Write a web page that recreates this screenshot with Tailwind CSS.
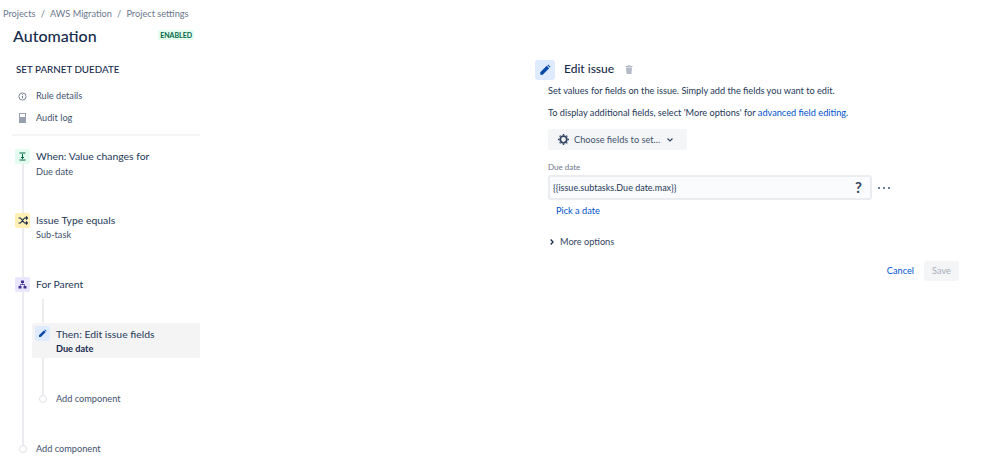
<!DOCTYPE html>
<html><head><meta charset="utf-8"><title>Automation</title>
<script src="https://cdn.jsdelivr.net/npm/@tailwindcss/browser@4"></script></head>
<body class="bg-white font-['Lato','Open_Sans',sans-serif] text-[#172b4d]">
<div class="w-[999px] h-[474px] overflow-hidden flex relative">
  <aside class="w-[535px] shrink-0 pl-[12px]">
    <div class="ml-[-9px] h-[26px] pt-[7px] text-[9.2px] leading-[14px] text-[#6b778c] flex gap-[5.2px]"><span>Projects</span><span>/</span><span>AWS Migration</span><span>/</span><span>Project settings</span></div>
    <div class="w-[182px] flex items-center justify-between h-[20px] pl-[1px]">
      <h1 class="text-[16px] font-medium leading-[20px] text-[#172b4d]">Automation</h1>
      <span class="mt-[-3px] h-[10px] px-[2px] bg-[#e3fcef] rounded-[2px] text-[7px] leading-[10px] font-bold text-[#006644]">ENABLED</span>
    </div>
    <div class="ml-[4px] mt-[16px] text-[9.8px] leading-[14px] font-medium text-[#172b4d]">SET PARNET DUEDATE</div>
    <div class="ml-[6px] mt-[13px] h-[14px] flex items-center gap-[9px] text-[9.2px] text-[#42526e]">
      <svg class="w-[9px] h-[9px]" viewBox="0 0 10 10" fill="none" stroke="#6b778c"><circle cx="5" cy="5" r="4"/><path d="M5 4.5v2.5M5 2.6v1" stroke-width="1.2"/></svg><span>Rule details</span></div>
    <div class="ml-[6px] mt-[8px] h-[14px] flex items-center gap-[9px] text-[9.2px] text-[#42526e]">
      <svg class="w-[9px] h-[10px]" viewBox="0 0 9 10"><path d="M1 0h7v10H1z" fill="#97a0af"/><path d="M2 1h5v3H2z" fill="#fff"/></svg><span>Audit log</span></div>
    <div class="w-[188px] h-[2px] bg-[#f4f5f7] mt-[9px]"></div>

    <div class="relative mt-[13px] w-[188px]">
      <div class="absolute left-[10px] top-[14px] w-[2px] h-[285px] bg-[#ebecf0]"></div>
      <div class="absolute left-[30px] top-[150px] w-[2px] h-[103px] bg-[#ebecf0]"></div>

      <div class="relative flex gap-[6px] ml-[3px] h-[64px]">
        <span class="w-[15px] h-[15px] rounded-[2px] bg-[#e3fcef] flex items-center justify-center"><svg class="w-[9px] h-[9px]" viewBox="0 0 9 9" fill="none" stroke="#006644" stroke-width="1"><path d="M1.5 1h6M1.5 8h6M4.5 2v4.5M3 5l1.5 1.5L6 5"/></svg></span>
        <div class="text-[10.4px] leading-[15px] text-[#253858]">When: Value changes for<div class="text-[9.2px] leading-[15px] text-[#42526e]">Due date</div></div>
      </div>
      <div class="relative flex gap-[6px] ml-[3px] h-[64px]">
        <span class="w-[15px] h-[15px] rounded-[2px] bg-[#fff0b3] flex items-center justify-center"><svg class="w-[10px] h-[9px]" viewBox="0 0 10 9" fill="none" stroke="#172b4d" stroke-width="1.2"><path d="M0.5 2h2l4 5h3M0.5 7h2l4-5h3M8 0.5L9.5 2 8 3.5M8 5.5L9.5 7 8 8.5"/></svg></span>
        <div class="text-[10.4px] leading-[15px] text-[#253858]">Issue Type equals<div class="text-[9.2px] leading-[14px] text-[#42526e]">Sub-task</div></div>
      </div>
      <div class="relative flex gap-[6px] ml-[3px] h-[46px]">
        <span class="w-[15px] h-[15px] rounded-[2px] bg-[#eae6ff] flex items-center justify-center"><svg class="w-[9px] h-[9px]" viewBox="0 0 9 9" fill="#403294"><path d="M3 0.5h3v2.5H3zM0.5 6h3v2.5h-3zM5.5 6h3v2.5h-3z"/><path d="M4.2 3h.6v1.3H7V6h-.6V4.9H2.6V6H2V4.3h2.2z"/></svg></span>
        <div class="text-[10.4px] leading-[15px] text-[#253858]">For Parent</div>
      </div>
      <div class="relative ml-[20px] h-[35px] w-[168px] rounded-[2px] bg-[#f4f4f5] flex gap-[6px] pl-[3px] pt-[3px]">
        <span class="w-[15px] h-[15px] rounded-[2px] bg-[#deebff] flex items-center justify-center"><svg class="w-[9px] h-[9px]" viewBox="0 0 9 9" fill="#0747a6"><path d="M1 6.2L5.8 1.4l1.8 1.8L2.8 8H1zM6.3 0.9l.6-.5 1.7 1.7-.5.6z"/></svg></span>
        <div class="text-[10.4px] leading-[15px] text-[#253858] pt-[1px]">Then: Edit issue fields<div class="text-[9.2px] leading-[14px] font-bold text-[#172b4d]">Due date</div></div>
      </div>
      <div class="relative ml-[27px] mt-[33px] h-[16px] flex items-center gap-[9px] text-[9.2px] text-[#42526e]">
        <span class="w-[8px] h-[8px] rounded-full border border-[#dfe1e6] bg-white"></span><span>Add component</span></div>
      <div class="relative ml-[7px] mt-[34px] h-[16px] flex items-center gap-[9px] text-[9.2px] text-[#42526e]">
        <span class="w-[8px] h-[8px] rounded-full border border-[#dfe1e6] bg-white"></span><span>Add component</span></div>
    </div>
  </aside>

  <main class="w-[424px] pt-[59px]">
    <div class="flex items-center h-[21px]">
      <span class="w-[20px] h-[20px] rounded-[3px] bg-[#deebff] flex items-center justify-center"><svg class="w-[12px] h-[12px]" viewBox="0 0 9 9" fill="#0747a6"><path d="M1 6.2L5.8 1.4l1.8 1.8L2.8 8H1zM6.3 0.9l.6-.5 1.7 1.7-.5.6z"/></svg></span>
      <h2 class="ml-[9px] mt-[-2px] text-[12px] font-medium text-[#172b4d] leading-[20px]">Edit issue</h2>
      <svg class="ml-[11px] w-[8px] h-[9px]" viewBox="0 0 8 9" fill="#b3bac5"><path d="M0.5 1h7v1h-7zM1 2.6h6L6.4 9H1.6zM2.5 0h3v.8h-3z"/></svg>
    </div>
    <div class="ml-[13px]">
      <p class="mt-[4px] text-[9.2px] leading-[14px] text-[#253858]">Set values for fields on the issue. Simply add the fields you want to edit.</p>
      <p class="mt-[8px] text-[9.2px] leading-[14px] text-[#253858]">To display additional fields, select 'More options' for <span class="text-[#0052cc]">advanced field editing</span>.</p>
      <div class="mt-[9px] w-[139px] h-[21px] rounded-[2px] bg-[#f4f5f7] flex items-center pl-[10px] text-[9.2px] text-[#42526e]">
        <svg class="w-[11px] h-[11px] mr-[5px]" viewBox="0 0 12 12" fill="none" stroke="#344563" stroke-width="2"><circle cx="6" cy="6" r="3.6"/><path d="M6 0v1.5M6 10.5V12M0 6h1.5M10.5 6H12M1.8 1.8l1 1M9.2 9.2l1 1M1.8 10.2l1-1M9.2 2.8l1-1" stroke-width="1.6"/></svg>
        <span>Choose fields to set...</span>
        <svg class="w-[6px] h-[4px] ml-[7px]" viewBox="0 0 6 4" fill="none" stroke="#344563" stroke-width="1.2"><path d="M0.5 0.5L3 3l2.5-2.5"/></svg>
      </div>
      <div class="mt-[11px] text-[8px] leading-[12px] text-[#6b778c]">Due date</div>
      <div class="flex items-center mt-[2px]">
        <div class="w-[324px] h-[25px] rounded-[3px] border-2 border-[#ebecf0] bg-[#fafbfc] flex items-center justify-between pl-[3px] pr-[8px] text-[9px] text-[#253858]">
          <span>{{issue.subtasks.Due date.max}}</span>
          <span class="text-[15px] font-bold text-[#344563]">?</span>
        </div>
        <span class="ml-[6px] w-[12px] flex justify-between"><i class="w-[2px] h-[2px] rounded-full bg-[#42526e]"></i><i class="w-[2px] h-[2px] rounded-full bg-[#42526e]"></i><i class="w-[2px] h-[2px] rounded-full bg-[#42526e]"></i></span>
      </div>
      <div class="mt-[3px] ml-[8px] text-[9.2px] leading-[15px] text-[#0052cc]">Pick a date</div>
      <div class="mt-[16px] ml-[2px] flex items-center text-[9.2px] leading-[15px] text-[#344563]">
        <svg class="w-[4px] h-[6px] mr-[6px]" viewBox="0 0 4 6" fill="none" stroke="#172b4d" stroke-width="1.3"><path d="M0.7 0.5L3 3 0.7 5.5"/></svg>More options</div>
      <div class="mt-[12px] flex justify-end items-center w-[411px] text-[9.2px]">
        <span class="text-[#0052cc]">Cancel</span>
        <span class="ml-[10px] w-[35px] h-[20px] rounded-[3px] bg-[#f4f5f7] text-[#a5adba] flex items-center justify-center">Save</span>
      </div>
    </div>
  </main>
</div>
</body></html>
